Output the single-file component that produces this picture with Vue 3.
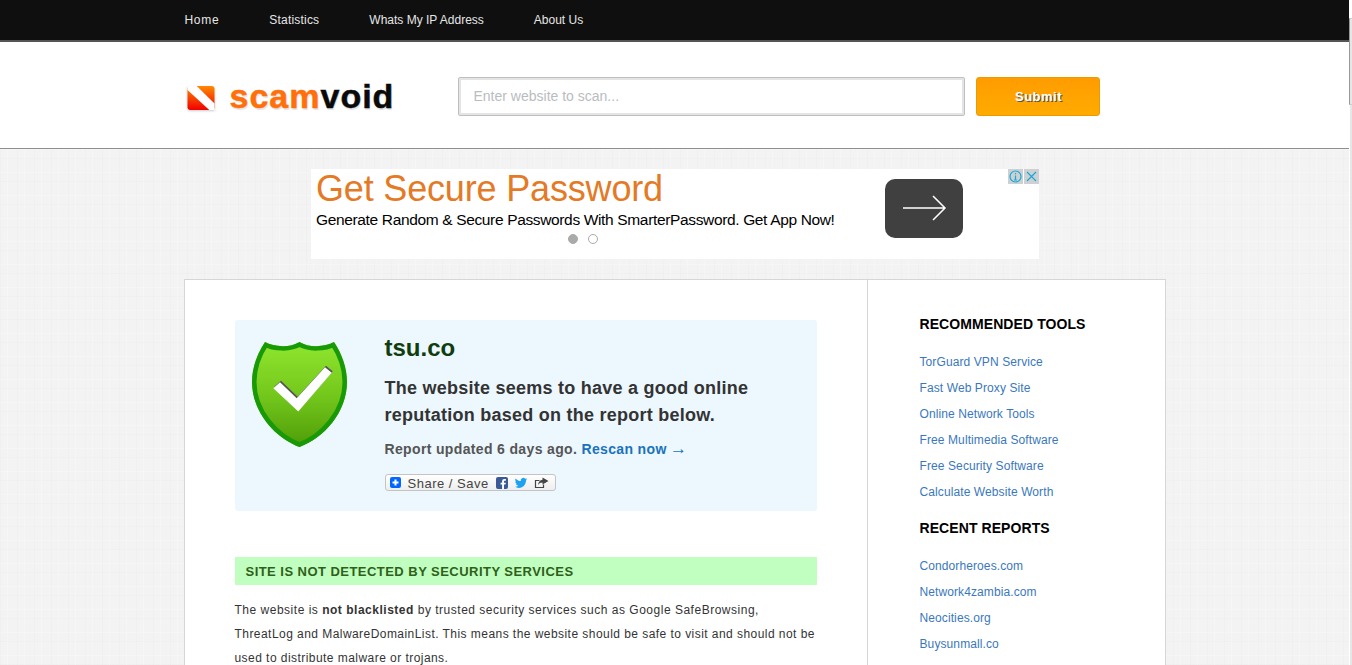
<script setup>
const nav = ['Home', 'Statistics', 'Whats My IP Address', 'About Us']
const tools = ['TorGuard VPN Service', 'Fast Web Proxy Site', 'Online Network Tools', 'Free Multimedia Software', 'Free Security Software', 'Calculate Website Worth']
const reports = ['Condorheroes.com', 'Network4zambia.com', 'Neocities.org', 'Buysunmall.co']
const shield = 'M13 0C22 5 38 6 47.500 0C57 6 73 5 82 0C90 12 95 26 95 40C95 70 72 96 47.500 105C23 96 0 70 0 40C0 26 5 12 13 0Z'
</script>

<template>
  <div class="page">
    <nav class="topbar">
      <div class="wrap navlinks">
        <a v-for="n in nav" :key="n" href="#">{{ n }}</a>
      </div>
    </nav>

    <header class="header">
      <div class="wrap headrow">
        <div class="logo">
          <svg class="logomark" width="28" height="26" viewBox="0 0 28 26">
            <defs>
              <linearGradient id="lg" x1="0" y1="0" x2="0" y2="1">
                <stop offset="0" stop-color="#ff8a00" />
                <stop offset="1" stop-color="#f00000" />
              </linearGradient>
            </defs>
            <rect x="0.500" y="1" width="27" height="24" rx="3" fill="url(#lg)" />
            <path d="M9.700 1L27.500 18.500V25H22.300L0.500 5V1Z" fill="#fff" />
          </svg>
          <span class="logotext"><span class="scam">scam</span>void</span>
        </div>
        <input class="search" type="text" placeholder="Enter website to scan..." />
        <button class="submit" type="button">Submit</button>
      </div>
    </header>

    <div class="ad">
      <div class="adcopy">
        <div class="adtitle">Get Secure Password</div>
        <div class="adsub">Generate Random &amp; Secure Passwords With SmarterPassword. Get App Now!</div>
        <div class="dots"><i class="dot on"></i><i class="dot"></i></div>
      </div>
      <div class="adarrow">
        <svg width="44" height="26" viewBox="0 0 44 26" fill="none" stroke="#fff" stroke-width="1.500">
          <path d="M0 13H42M30 1L42 13L30 25" />
        </svg>
      </div>
      <div class="adchoices">
        <svg width="15" height="15" viewBox="0 0 15 15" fill="none" stroke="#1aa9d6" stroke-width="1.200">
          <circle cx="7.500" cy="7.500" r="5.500" />
          <path d="M7.500 6.500V11M7.500 4V5.200M6 11H9" />
        </svg>
        <svg width="15" height="15" viewBox="0 0 15 15" fill="none" stroke="#1aa9d6" stroke-width="1.200">
          <path d="M3 3L12 12M12 3L3 12" />
        </svg>
      </div>
    </div>

    <div class="wrap card">
      <main class="main">
        <section class="result">
          <svg class="shield" width="95" height="105" viewBox="0 0 95 105">
            <defs>
              <linearGradient id="sg" x1="0" y1="0" x2="0" y2="1">
                <stop offset="0" stop-color="#8fe62e" />
                <stop offset="0.500" stop-color="#74c81c" />
                <stop offset="1" stop-color="#4f9c08" />
              </linearGradient>
              <clipPath id="sc"><path :d="shield" /></clipPath>
            </defs>
            <path :d="shield" fill="url(#sg)" />
            <path :d="shield" fill="none" stroke="#189a06" stroke-width="9" clip-path="url(#sc)" />
            <path d="M21.300 46.200L28 40.200L44.700 56.200L73 25.200L79.700 30.800L46.300 69.500Z" fill="#555" transform="translate(1 -1.500)" />
            <path d="M21.300 46.200L28 40.200L44.700 56.200L73 25.200L79.700 30.800L46.300 69.500Z" fill="#fff" />
          </svg>
          <div class="verdict">
            <h1>tsu.co</h1>
            <p class="statement">The website seems to have a good online reputation based on the report below.</p>
            <p class="updated">Report updated 6 days ago. <a href="#">Rescan now <span class="arr">→</span></a></p>
            <div class="share">
              <svg width="11" height="11" viewBox="0 0 11 11">
                <rect width="11" height="11" rx="2" fill="#0166ff" />
                <path d="M5.500 2.500V8.500M2.500 5.500H8.500" stroke="#fff" stroke-width="2" />
              </svg>
              <span>Share / Save</span>
              <svg width="12" height="12" viewBox="0 0 12 12">
                <rect width="12" height="12" rx="2" fill="#3b5998" />
                <path d="M8 12V7.500H9.500L9.800 5.700H8V4.600C8 4 8.200 3.700 8.900 3.700H9.900V2.100C9.600 2 9 2 8.400 2C7 2 6.100 2.800 6.100 4.300V5.700H4.600V7.500H6.100V12Z" fill="#fff" />
              </svg>
              <svg width="14" height="12" viewBox="0 0 24 22">
                <path d="M23 3.900c-.8.400-1.700.600-2.600.700.900-.600 1.600-1.400 2-2.500-.900.500-1.900.900-2.900 1.100A4.600 4.600 0 0 0 11.600 7.400C7.800 7.200 4.400 5.400 2.100 2.600c-.400.700-.600 1.500-.600 2.300 0 1.600.800 3 2 3.800-.700 0-1.400-.200-2.100-.600v.100c0 2.200 1.600 4.100 3.700 4.500-.700.200-1.400.200-2.100.100.600 1.800 2.300 3.200 4.300 3.200A9.200 9.200 0 0 1 1 18c2 1.300 4.500 2 7 2 8.500 0 13.100-7 13.100-13.100v-.600c.900-.600 1.700-1.400 2.300-2.400z" fill="#1da1f2" />
              </svg>
              <svg width="15" height="12" viewBox="0 0 14 12" fill="none">
                <path d="M9 7.500V10.500H1V3.500H5" stroke="#444" stroke-width="1.200" />
                <path d="M8 0.500L14 4L8 7.500V5.500C6 5.500 4.500 6.300 3.500 8C3.700 5 5.500 3 8 2.700Z" fill="#444" />
              </svg>
            </div>
          </div>
        </section>

        <h2 class="notice">SITE IS NOT DETECTED BY SECURITY SERVICES</h2>
        <p class="body"><span class="first">The website is <b>not blacklisted</b> by trusted security services such as Google SafeBrowsing,</span><br />ThreatLog and MalwareDomainList. This means the website should be safe to visit and should not be used to distribute malware or trojans.</p>
      </main>

      <aside class="side">
        <h3>RECOMMENDED TOOLS</h3>
        <ul>
          <li v-for="t in tools" :key="t"><a href="#">{{ t }}</a></li>
        </ul>
        <h3 class="second">RECENT REPORTS</h3>
        <ul>
          <li v-for="r in reports" :key="r"><a href="#">{{ r }}</a></li>
        </ul>
      </aside>
    </div>

    <div class="scrollbar"><div class="thumb"></div></div>
  </div>
</template>

<style>
html, body { margin: 0; height: 665px; overflow: hidden; background: #fff; }
</style>

<style scoped>
.page {
  position: relative;
  width: 1352px;
  height: 665px;
  overflow: hidden;
  padding-right: 3px;
  box-sizing: border-box;
  font-family: "Liberation Sans", Arial, sans-serif;
  color: #333;
  background-color: #f3f3f3;
  background-image:
    repeating-linear-gradient(90deg, rgba(0,0,0,0.01) 0 1px, transparent 1px 7px, rgba(255,255,255,0.22) 7px 8px, transparent 8px 17px),
    repeating-linear-gradient(0deg, rgba(0,0,0,0.01) 0 1px, transparent 1px 9px, rgba(255,255,255,0.22) 9px 10px, transparent 10px 23px);
}
a { text-decoration: none; }
.wrap { width: 982px; margin: 0 auto; box-sizing: border-box; }

.topbar {
  height: 42px;
  box-sizing: border-box;
  background: #0f0f0f;
  border-bottom: 2px solid #555;
}
.navlinks { display: flex; gap: 50px; padding-left: 1px; height: 40px; align-items: center; }
.navlinks a { color: #e6e6e6; font-size: 12px; }
.navlinks a:nth-child(1) { letter-spacing: 0.700px; }
.navlinks a:nth-child(2) { letter-spacing: 0.200px; }

.header {
  height: 107px;
  box-sizing: border-box;
  background: #fff;
  border-bottom: 1px solid #8f8f8f;
}
.headrow { display: flex; align-items: flex-start; padding-top: 35px; }
.logo { display: flex; align-items: center; width: 274px; height: 39px; padding-left: 3px; box-sizing: border-box; }
.logomark { margin-top: 3px; flex: none; filter: drop-shadow(0 1px 1px #ccc); }
.logotext {
  margin-left: 15px;
  font-size: 34px;
  font-weight: 700;
  letter-spacing: 1px;
  color: #0a0a0a;
  line-height: 39px;
  -webkit-text-stroke: 0.500px currentColor;
  text-shadow: 1px 2px 1px #e4e4e4;
}
.scam { color: #ff6f0a; }
.search {
  width: 507px;
  height: 39px;
  box-sizing: border-box;
  border: 1px solid #bfbfbf;
  border-radius: 2px;
  box-shadow: inset 0 0 0 2px #e4e4e4;
  padding: 0 15px 2px;
  font: 14px "Liberation Sans", Arial, sans-serif;
  margin-right: 11px;
  outline: none;
  background: #fff;
}
.search::placeholder { color: #b9bdc0; opacity: 1; }
.submit {
  width: 124px;
  height: 39px;
  border: 1px solid #e99b00;
  border-radius: 3px;
  background: linear-gradient(#ff9c00, #ffab00);
  color: #fff;
  font: 700 13px "Liberation Sans", Arial, sans-serif;
  letter-spacing: 0.500px;
  text-shadow: 1px 1px 0 #555;
  padding: 0 0 0 2px;
}

.ad {
  position: relative;
  width: 728px;
  height: 90px;
  margin: 20px auto 20px;
  left: 0.500px;
  background: #fff;
  display: flex;
  align-items: flex-start;
  padding: 0 0 0 5px;
  box-sizing: border-box;
}
.adcopy { width: 534px; flex: none; }
.adtitle { font-size: 36px; line-height: 40px; color: #e47a25; letter-spacing: -0.170px; }
.adsub { font-size: 15.500px; line-height: 18px; color: #000; margin-top: 2px; white-space: nowrap; letter-spacing: -0.350px; }
.dots { display: flex; justify-content: center; gap: 10px; margin-top: 5px; }
.dot { width: 8px; height: 8px; border: 1px solid #aaa; border-radius: 50%; background: #fff; }
.dot.on { background: #aaa; }
.adarrow {
  width: 78px;
  height: 59px;
  margin: 10px 0 0 35px;
  border-radius: 10px;
  background: #404040;
  display: flex;
  align-items: center;
  justify-content: center;
}
.adarrow svg { margin-left: 2px; margin-top: -1px; }
.adchoices {
  position: absolute;
  top: 0;
  right: 0;
  display: flex;
  gap: 1px;
}
.adchoices svg { background: #cdd1d3; display: block; }

.card {
  display: flex;
  height: 420px;
  background: #fff;
  border: 1px solid #d6d6d6;
}
.main { width: 683px; flex: none; box-sizing: border-box; padding: 40px 50px 0; border-right: 1px solid #d6d6d6; }
.result {
  display: flex;
  height: 191px;
  box-sizing: border-box;
  padding: 22px 0 0 17px;
  background: #ecf7fe;
  border-radius: 3px;
}
.shield { flex: none; }
.verdict { margin-left: 38px; margin-top: -22px; padding-top: 14px; }
.verdict h1 { margin: 0; font-size: 24px; line-height: 28px; font-weight: 700; color: #0f3d0f; }
.statement { margin: 13px 0 0; width: 410px; font-size: 18px; line-height: 27px; font-weight: 700; color: #333; letter-spacing: 0.250px; }
.updated { margin: 11px 0 0; font-size: 14px; line-height: 18px; font-weight: 700; color: #555; letter-spacing: 0.350px; }
.updated a { color: #1a73ba; }
.arr { font-size: 17px; line-height: 14px; letter-spacing: 0; margin-left: -1px; }
.share {
  display: flex;
  align-items: center;
  width: 171px;
  height: 17px;
  margin-top: 16px;
  padding-left: 4px;
  box-sizing: border-box;
  border: 1px solid #c4c4c4;
  border-radius: 3px;
  background: linear-gradient(#fff, #eee);
}
.share span { margin: 1px 7px 0 1px; font-size: 13px; line-height: 15px; letter-spacing: 0.500px; color: #444; white-space: nowrap; }
.share svg { flex: none; margin-right: 6px; }

.notice {
  margin: 46px 0 0;
  height: 28px;
  padding-left: 11px;
  background: #c0ffc0;
  font-size: 13px;
  line-height: 29px;
  font-weight: 700;
  letter-spacing: 0.460px;
  color: #2f5f1a;
  white-space: nowrap;
}
.body { margin: 13px 0 0; font-size: 12px; line-height: 24px; color: #333; letter-spacing: 0.450px; }
.body .first { letter-spacing: 0.510px; }
.body b { color: #333; }

.side { padding: 35px 0 0 52px; flex: 1; }
.side h3 { margin: 0; font-size: 14px; line-height: 18px; font-weight: 700; color: #000; white-space: nowrap; letter-spacing: 0.080px; }
.side ul { list-style: none; margin: 16px 0 0; padding: 0; }
.side li { height: 26px; font-size: 12px; line-height: 26px; }
.side li a { color: #3a78bd; letter-spacing: 0.100px; }
.side .second { margin-top: 14px; }

.scrollbar { position: absolute; top: 0; right: 0; width: 3px; height: 665px; background: #fff; }
.scrollbar::after { content: ""; position: absolute; left: 1px; right: 0; top: 105px; bottom: 0; background: #e6e6e6; }
.thumb { position: absolute; left: 0; right: 0; top: 18px; height: 87px; background: #e6e6e6; border-left: 1px solid #999; border-top: 1px solid #ccc; border-bottom: 1px solid #ccc; box-sizing: border-box; }
</style>
